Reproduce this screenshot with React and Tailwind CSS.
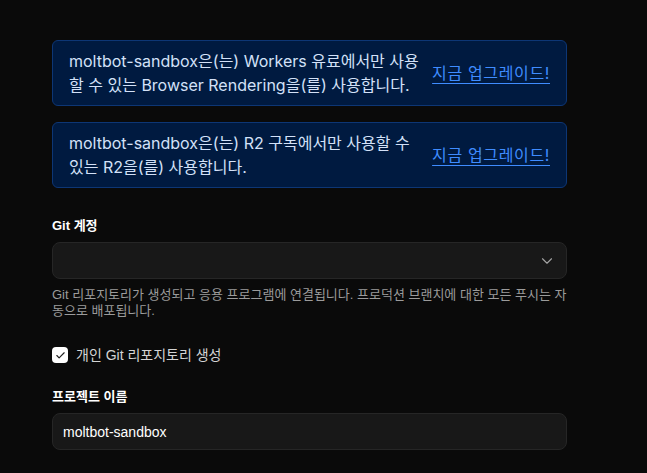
import React, { useState } from "react";
import { ChevronDown, Check } from "lucide-react";

const FONT = {
  fontFamily: 'Inter, "Noto Sans CJK KR", sans-serif',
};

// form section in the reference renders with an Arial-like face
const FORM_FONT = {
  fontFamily: '"Liberation Sans", "Noto Sans CJK KR", sans-serif',
};

const Notice = ({ children }) => (
  <div className="flex items-center gap-3 rounded-md border border-[#0d3675] bg-[#001a40] px-4 py-2">
    <p className="flex-1 text-base leading-6 text-[#d3e1f8]">{children}</p>
    <a
      href="#"
      className="shrink-0 text-base leading-6 tracking-[0.04em] text-[#3f8cff] underline underline-offset-4"
    >
      지금 업그레이드!
    </a>
  </div>
);

const App = () => {
  const [createRepo, setCreateRepo] = useState(true);
  const [name, setName] = useState("moltbot-sandbox");

  return (
    <div
      className="min-h-[473px] w-full bg-[#0a0a0a] pt-10 pb-6"
      style={FONT}
    >
      <div className="ml-[52px] w-[515px]">
        {/* Plan notices */}
        <div className="space-y-4">
          <Notice>
            moltbot-sandbox은(는) Workers 유료에서만 사용할 수 있는 Browser
            Rendering을(를) 사용합니다.
          </Notice>
          <Notice>
            moltbot-sandbox은(는) R2 구독에서만 사용할 수 있는 R2을(를)
            사용합니다.
          </Notice>
        </div>

        <div style={FORM_FONT}>
          {/* Git account */}
          <div className="mt-[30px]">
            <label className="block text-[13px] leading-4 font-semibold text-white">
              Git 계정
            </label>
            <button
              type="button"
              className="mt-2 flex h-[37px] w-full items-center justify-end rounded-lg border border-[#262626] bg-[#181818] pr-[10px]"
            >
              <ChevronDown size={18} strokeWidth={1.5} className="text-[#a3a3a3]" />
            </button>
            <p className="mt-2 text-[13px] leading-4 text-[#9b9b9b]">
              Git 리포지토리가 생성되고 응용 프로그램에 연결됩니다. 프로덕션
              브랜치에 대한 모든 푸시는 자동으로 배포됩니다.
            </p>
          </div>

          <label className="mt-[26px] flex items-center gap-2 text-sm leading-5 text-[#d4d4d4]">
            <button
              type="button"
              onClick={() => setCreateRepo(!createRepo)}
              className="flex h-4 w-4 items-center justify-center rounded-[4px] bg-white"
            >
              {createRepo && (
                <Check size={11} strokeWidth={2.5} className="text-[#222]" />
              )}
            </button>
            개인 Git 리포지토리 생성
          </label>

          {/* Project name */}
          <div className="mt-6">
            <label className="block text-[13px] leading-4 font-semibold text-white">
              프로젝트 이름
            </label>
            <input
              value={name}
              onChange={(e) => setName(e.target.value)}
              style={FORM_FONT}
              className="mt-2 h-[37px] w-full rounded-lg border border-[#262626] bg-[#181818] px-[10px] text-sm text-white outline-none"
            />
          </div>
        </div>
      </div>
    </div>
  );
};

export default App;
